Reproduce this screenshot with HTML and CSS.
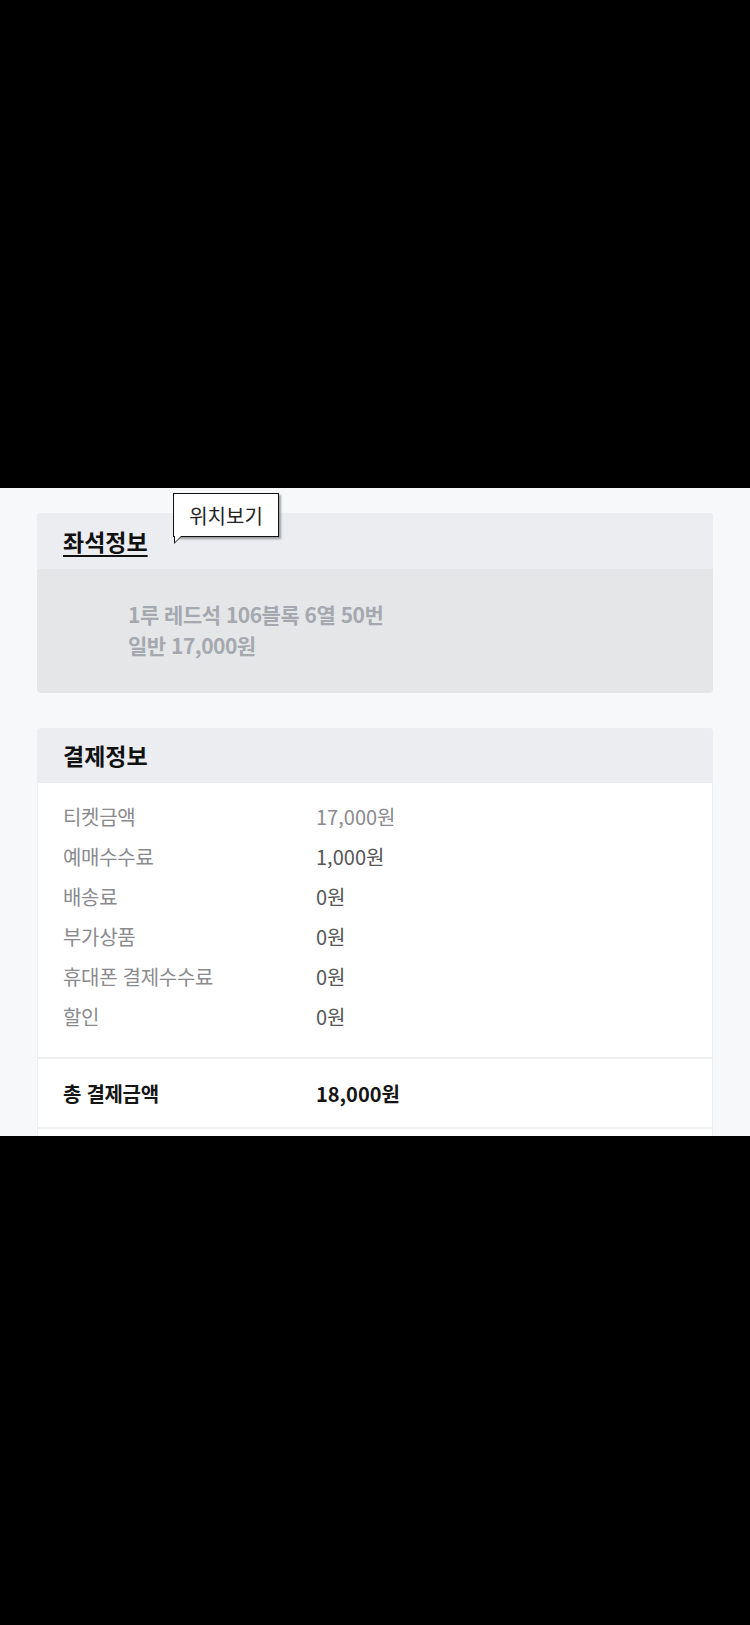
FILE: index.html
```html
<!DOCTYPE html>
<html lang="ko">
<head>
<meta charset="utf-8">
<link rel="stylesheet" href="styles.css">
</head>
<body>
<div class="top-black"></div>
<main class="page">
  <section class="card seat">
    <div class="card-head">
      <h2 class="title underline">좌석정보</h2>
      <div class="tip">위치보기</div>
    </div>
    <div class="seat-body">
      <p>1루 레드석 106블록 6열 50번</p>
      <p>일반 17,000원</p>
    </div>
  </section>
  <section class="card pay">
    <div class="card-head">
      <h2 class="title">결제정보</h2>
    </div>
    <div class="pay-body">
      <div class="row"><span class="label">티켓금액</span><span class="val light">17,000원</span></div>
      <div class="row"><span class="label">예매수수료</span><span class="val">1,000원</span></div>
      <div class="row"><span class="label">배송료</span><span class="val">0원</span></div>
      <div class="row"><span class="label">부가상품</span><span class="val">0원</span></div>
      <div class="row"><span class="label">휴대폰 결제수수료</span><span class="val">0원</span></div>
      <div class="row"><span class="label">할인</span><span class="val">0원</span></div>
    </div>
    <div class="total">
      <span class="label">총 결제금액</span><span class="val">18,000원</span>
    </div>
    <div class="after"></div>
  </section>
</main>
<div class="bottom-black"></div>
</body>
</html>
```
FILE: styles.css
```css
html, body {
  margin: 0;
  padding: 0;
  background: #000;
}
body {
  font-family: "Noto Sans CJK KR", "Noto Sans", sans-serif;
  width: 750px;
}
.top-black {
  height: 488px;
  background: #000;
}
.page {
  height: 648px;
  overflow: hidden;
  background: #f7f8fa;
  padding: 25px 37px 0;
  box-sizing: border-box;
}
.card {
  border-radius: 4px;
  overflow: visible;
}
.seat {
  background: #e5e6e8;
}
.card-head {
  position: relative;
  background: #ecedf1;
  height: 56px;
  display: flex;
  align-items: center;
  padding-left: 26px;
  border-radius: 4px 4px 0 0;
}
.title {
  margin: 0;
  font-size: 23px;
  font-weight: 700;
  color: #111;
  line-height: 1;
}
.underline {
  text-decoration: underline;
  text-decoration-thickness: 2px;
  text-underline-offset: 4px;
}
.tip {
  position: absolute;
  left: 136px;
  top: -20px;
  width: 106px;
  height: 44px;
  box-sizing: border-box;
  border: 1px solid #111;
  background: #fff;
  box-shadow: 2px 2px 2px rgba(0,0,0,0.35);
  font-size: 20px;
  color: #222;
  display: flex;
  align-items: center;
  justify-content: center;
}
.tip::before {
  content: "";
  position: absolute;
  left: 0;
  bottom: -8px;
  width: 0;
  height: 0;
  border-left: 8px solid #111;
  border-bottom: 8px solid transparent;
}
.tip::after {
  content: "";
  position: absolute;
  left: 1px;
  bottom: -6px;
  width: 0;
  height: 0;
  border-left: 6px solid #fff;
  border-bottom: 6px solid transparent;
}
.seat-body {
  height: 124px;
  box-sizing: border-box;
  padding: 30px 0 0 91px;
}
.seat-body p {
  margin: 0;
  font-size: 21px;
  line-height: 31px;
  font-weight: 700;
  color: #a6a8b0;
  letter-spacing: -0.5px;
}
.pay {
  margin-top: 35px;
  background: #fff;
  border-left: 1px solid #eceef0;
  border-right: 1px solid #eceef0;
}
.pay .card-head {
  height: 55px;
  margin: 0 -1px;
}
.pay-body {
  padding: 13px 0 21px 25px;
  border-bottom: 2px solid #eeeff1;
}
.row {
  display: flex;
  align-items: center;
  height: 40px;
}
.label {
  width: 253px;
  font-size: 20px;
  color: #8a8a8e;
  letter-spacing: -0.3px;
}
.val {
  font-size: 20px;
  color: #555558;
}
.val.light {
  color: #8a8a8e;
}
.total {
  display: flex;
  align-items: center;
  height: 68px;
  padding-left: 25px;
  border-bottom: 2px solid #eeeff1;
}
.total .label, .total .val {
  font-weight: 700;
  color: #151515;
}
.after {
  height: 40px;
}
.bottom-black {
  height: 489px;
  background: #000;
}
```
